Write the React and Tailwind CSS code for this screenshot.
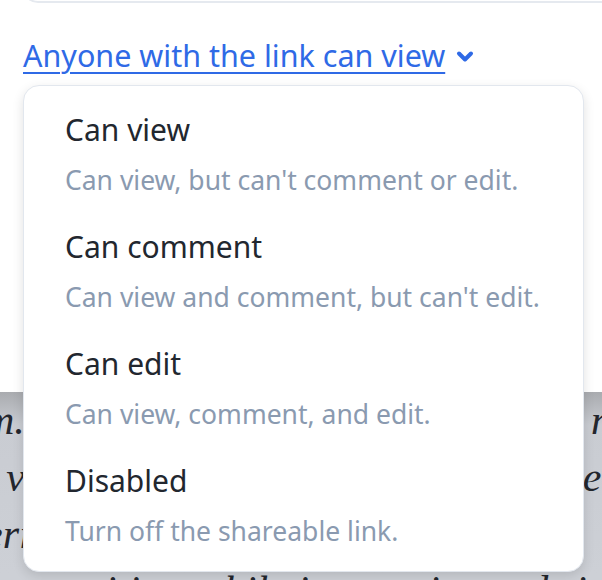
export default function App() {
  const items = [
    ["Can view", "Can view, but can't comment or edit."],
    ["Can comment", "Can view and comment, but can't edit."],
    ["Can edit", "Can view, comment, and edit."],
    ["Disabled", "Turn off the shareable link."],
  ];
  const bgLines = [
    ["m.", "n"],
    ["t v", "e."],
    ["eri", ""],
    ["r annuities, while in a cruise and rising", ""],
  ];
  return (
    <div className="relative w-[602px] h-[580px] overflow-hidden bg-[#cdd0d6]" style={{ fontFamily: '"Noto Sans", sans-serif' }}>
      <div className="h-[398px] bg-white flex flex-col">
        <div className="ml-[22px] mr-[-40px] mt-[-30px] h-[33px] rounded-2xl border-2 border-[#e5e9ef]" />
        <div className="pl-[23px] pt-[32px] flex items-center gap-[11px]">
          <span className="text-[30.5px] leading-[40px] text-[#2f6ae6] underline decoration-2 underline-offset-[5px]">
            Anyone with the link can view
          </span>
          <svg width="18" height="13" viewBox="0 0 18 13" className="mt-[3px]">
            <path d="M3 3.5 L9 9.5 L15 3.5" fill="none" stroke="#2f6ae6" strokeWidth="4" strokeLinecap="round" strokeLinejoin="round" />
          </svg>
        </div>
      </div>
      <div className="relative h-[182px] bg-gradient-to-b from-[#a9abaf] via-[#c9ccd2] to-[#cdd0d6] via-[18%]">
        <div className="flex flex-col mt-[-6px]" style={{ fontFamily: '"Liberation Serif", serif' }}>
          {bgLines.map(([l, r], i) => (
            <div key={i} className="flex justify-between h-[57px] items-center italic text-[42px] text-[#23262d] whitespace-nowrap">
              <span className={i === 3 ? "ml-[-6px]" : "ml-[-16px]"}>{l}</span>
              <span className="mr-[-10px]">{r}</span>
            </div>
          ))}
        </div>
      </div>
      <div className="absolute left-[23px] top-[85px] w-[561px] h-[487px] bg-white rounded-[16px] border border-[#e2e7ee] shadow-[0_4px_12px_rgba(0,0,0,0.12)] pl-[41px] pt-[24px] flex flex-col gap-[27px]">
        {items.map(([t, d]) => (
          <div key={t} className="flex flex-col">
            <div className="text-[30px] leading-[40px] text-[#22272f]">{t}</div>
            <div className="mt-[10px] text-[26.5px] leading-[40px] text-[#8a9ab0]">{d}</div>
          </div>
        ))}
      </div>
    </div>
  );
}
